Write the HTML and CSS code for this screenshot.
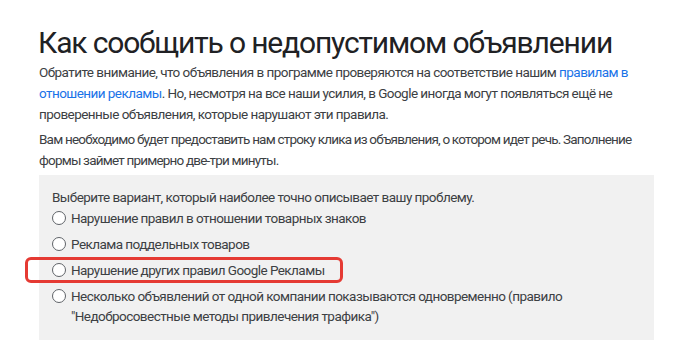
FILE: index.html
```html
<!DOCTYPE html>
<html lang="ru">
<head>
  <meta charset="UTF-8">
  <meta name="viewport" content="width=device-width, initial-scale=1.0">
  <title>Как сообщить о недопустимом объявлении</title>
  <link rel="stylesheet" href="styles.css">
</head>
<body>
  <div class="article">
    <h1 class="title">Как сообщить о недопустимом объявлении</h1>
    <p>Обратите внимание, что объявления в программе проверяются на соответствие нашим <a href="#">правилам в отношении рекламы</a>. Но, несмотря на все наши усилия, в Google иногда могут появляться ещё не проверенные объявления, которые нарушают эти правила.</p>
    <p class="note">Вам необходимо будет предоставить нам строку клика из объявления, о котором идет речь. Заполнение формы займет примерно две-три минуты.</p>

    <div class="picker">
      <div class="question">Выберите вариант, который наиболее точно описывает вашу проблему.</div>
      <label class="option">
        <input type="radio" name="problem">
        <span>Нарушение правил в отношении товарных знаков</span>
      </label>
      <label class="option">
        <input type="radio" name="problem">
        <span>Реклама поддельных товаров</span>
      </label>
      <label class="option highlight">
        <input type="radio" name="problem">
        <span>Нарушение других правил Google Рекламы</span>
      </label>
      <label class="option">
        <input type="radio" name="problem">
        <span>Несколько объявлений от одной компании показываются одновременно (правило "Недобросовестные методы привлечения трафика")</span>
      </label>
    </div>
  </div>
</body>
</html>
```

FILE: styles.css
```css
body {
  margin: 0;
  background: #ffffff;
  font-family: Roboto, "Noto Sans", Arial, sans-serif;
  color: #3c4043;
}

.article {
  width: 615px;
  padding: 26px 0 0 39px;
}

.title {
  margin: 0 0 2px -1px;
  font-size: 30px;
  font-weight: 400;
  letter-spacing: -1.15px;
  line-height: 34px;
  color: #202124;
}

p {
  margin: 0 0 4px;
  font-size: 13.5px;
  letter-spacing: -0.55px;
  line-height: 21px;
}

p.note {
  letter-spacing: -0.8px;
  margin-right: -12px;
}

a {
  color: #1a73e8;
  text-decoration: none;
}

.picker {
  margin-top: 4px;
  height: 165px;
  box-sizing: border-box;
  padding: 12px 13px;
  background: #f1f1f1;
  font-size: 13.5px;
  letter-spacing: -0.55px;
}

.question {
  line-height: 20px;
  margin-bottom: -2px;
}

.option {
  position: relative;
  display: flex;
  align-items: flex-start;
  gap: 5px;
  padding: 3px 0;
  line-height: 20px;
}

.option input {
  appearance: none;
  flex: none;
  width: 14px;
  height: 14px;
  margin: 3px 0 0;
  border: 1.3px solid #5f6368;
  border-radius: 50%;
  background: #ffffff;
}

.option span {
  max-width: 560px;
}

.highlight::after {
  content: "";
  position: absolute;
  left: -27px;
  top: 0;
  width: 318px;
  height: 26px;
  box-sizing: border-box;
  border: 3px solid #e53a33;
  border-radius: 6px;
}
```
